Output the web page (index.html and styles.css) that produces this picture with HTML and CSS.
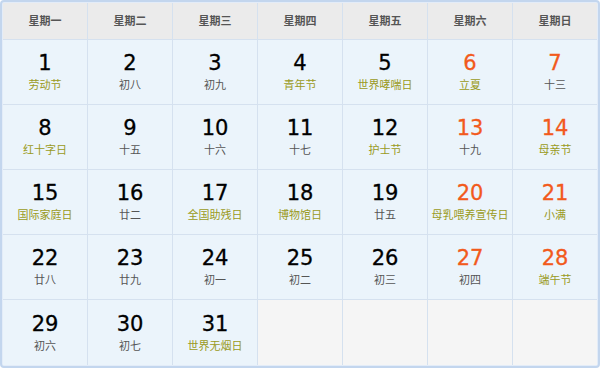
FILE: index.html
```html
<!DOCTYPE html>
<html>
<head>
<meta charset="utf-8">
<link rel="stylesheet" href="styles.css">
</head>
<body>
<div class="cal">
  <div class="grid">
    <div class="hd">星期一</div><div class="hd">星期二</div><div class="hd">星期三</div><div class="hd">星期四</div><div class="hd">星期五</div><div class="hd">星期六</div><div class="hd">星期日</div>

    <div class="day"><span class="n">1</span><span class="l fest">劳动节</span></div>
    <div class="day"><span class="n">2</span><span class="l">初八</span></div>
    <div class="day"><span class="n">3</span><span class="l">初九</span></div>
    <div class="day"><span class="n">4</span><span class="l fest">青年节</span></div>
    <div class="day"><span class="n">5</span><span class="l fest">世界哮喘日</span></div>
    <div class="day we"><span class="n">6</span><span class="l fest">立夏</span></div>
    <div class="day we"><span class="n">7</span><span class="l">十三</span></div>

    <div class="day"><span class="n">8</span><span class="l fest">红十字日</span></div>
    <div class="day"><span class="n">9</span><span class="l">十五</span></div>
    <div class="day"><span class="n">10</span><span class="l">十六</span></div>
    <div class="day"><span class="n">11</span><span class="l">十七</span></div>
    <div class="day"><span class="n">12</span><span class="l fest">护士节</span></div>
    <div class="day we"><span class="n">13</span><span class="l">十九</span></div>
    <div class="day we"><span class="n">14</span><span class="l fest">母亲节</span></div>

    <div class="day"><span class="n">15</span><span class="l fest">国际家庭日</span></div>
    <div class="day"><span class="n">16</span><span class="l">廿二</span></div>
    <div class="day"><span class="n">17</span><span class="l fest">全国助残日</span></div>
    <div class="day"><span class="n">18</span><span class="l fest">博物馆日</span></div>
    <div class="day"><span class="n">19</span><span class="l">廿五</span></div>
    <div class="day we"><span class="n">20</span><span class="l fest">母乳喂养宣传日</span></div>
    <div class="day we"><span class="n">21</span><span class="l fest">小满</span></div>

    <div class="day"><span class="n">22</span><span class="l">廿八</span></div>
    <div class="day"><span class="n">23</span><span class="l">廿九</span></div>
    <div class="day"><span class="n">24</span><span class="l">初一</span></div>
    <div class="day"><span class="n">25</span><span class="l">初二</span></div>
    <div class="day"><span class="n">26</span><span class="l">初三</span></div>
    <div class="day we"><span class="n">27</span><span class="l">初四</span></div>
    <div class="day we"><span class="n">28</span><span class="l fest">端午节</span></div>

    <div class="day"><span class="n">29</span><span class="l">初六</span></div>
    <div class="day"><span class="n">30</span><span class="l">初七</span></div>
    <div class="day"><span class="n">31</span><span class="l fest">世界无烟日</span></div>
    <div class="empty"></div>
    <div class="empty"></div>
    <div class="empty"></div>
    <div class="empty"></div>
  </div>
</div>
</body>
</html>
```
FILE: styles.css
```css
html, body {
  margin: 0;
  padding: 0;
  background: #ffffff;
}
.cal {
  width: 600px;
  height: 368px;
  box-sizing: border-box;
  border: 2px solid #c3d6ee;
  border-radius: 4px;
  padding: 1px;
  background: #e3ecf8;
  overflow: hidden;
}
.grid {
  display: grid;
  grid-template-columns: repeat(7, 1fr);
  grid-template-rows: 36px 64px 64px 64px 64px 1fr;
  gap: 1px;
  height: 100%;
  background: #d5e1ef;
}
.hd {
  background: #ebebeb;
  display: flex;
  align-items: center;
  justify-content: center;
  font-family: "Noto Sans CJK SC", sans-serif;
  font-weight: 700;
  font-size: 11px;
  color: #555555;
  padding-bottom: 2px;
}
.day {
  background: #ebf4fb;
  display: flex;
  flex-direction: column;
  align-items: center;
  justify-content: center;
  padding-bottom: 1px;
}
.empty {
  background: #f5f5f5;
}
.n {
  font-family: "DejaVu Sans", Verdana, sans-serif;
  font-size: 21px;
  line-height: 24px;
  color: #000000;
  -webkit-text-stroke: 0.3px currentColor;
}
.l {
  font-family: "Noto Sans CJK SC", sans-serif;
  font-size: 11px;
  line-height: 15px;
  margin-top: 2px;
  color: #555555;
}
.l.fest {
  color: #9a9a22;
}
.we .n {
  color: #f25a1c;
}
```
